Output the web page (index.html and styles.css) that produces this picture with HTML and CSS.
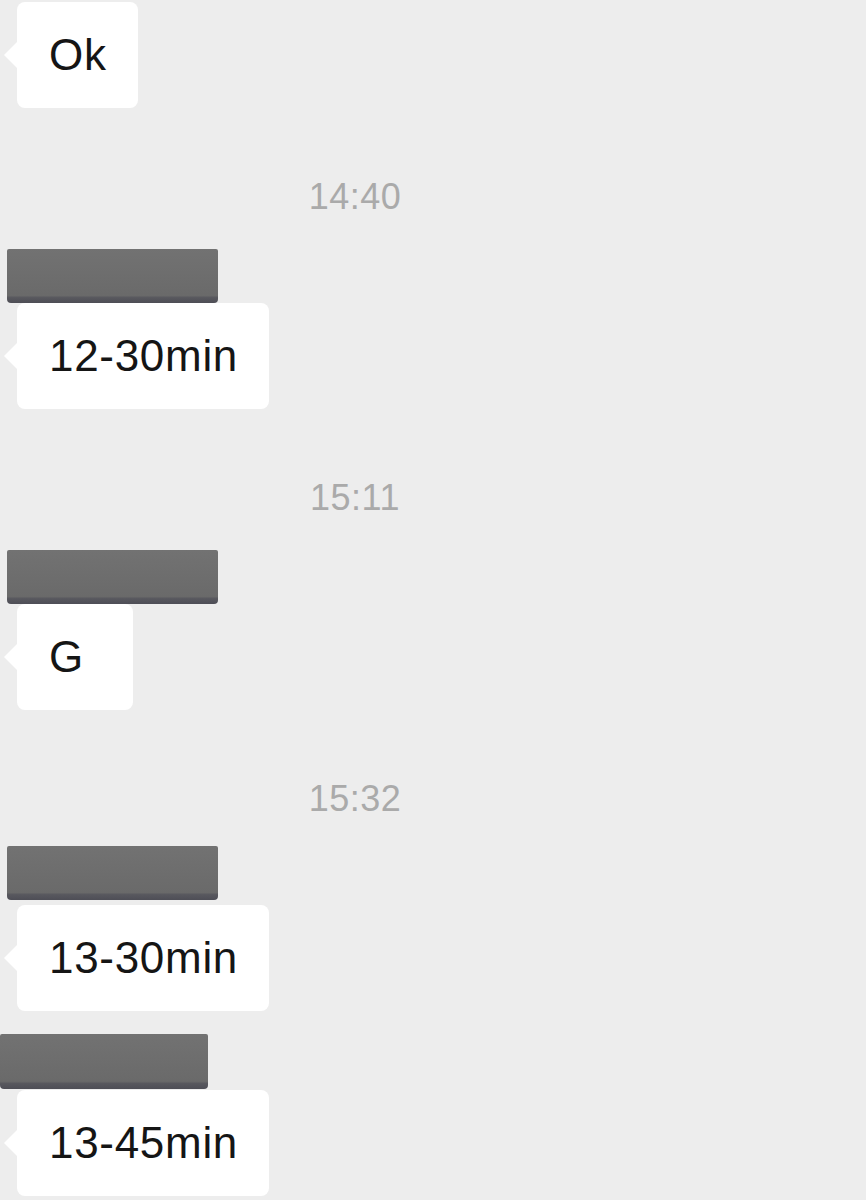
FILE: index.html
```html
<!DOCTYPE html>
<html>
<head>
<meta charset="utf-8">
<link rel="stylesheet" href="styles.css">
</head>
<body>
<div class="chat">
  <div class="msg msg-first">
    <div class="bubble">Ok</div>
  </div>

  <div class="time">14:40</div>
  <div class="msg">
    <div class="name-mask"></div>
    <div class="bubble">12-30min</div>
  </div>

  <div class="time">15:11</div>
  <div class="msg">
    <div class="name-mask"></div>
    <div class="bubble">G</div>
  </div>

  <div class="time time-close">15:32</div>
  <div class="msg">
    <div class="name-mask name-mask-gap"></div>
    <div class="bubble">13-30min</div>
  </div>

  <div class="msg msg-follow">
    <div class="name-mask name-mask-edge"></div>
    <div class="bubble">13-45min</div>
  </div>
</div>
</body>
</html>
```

FILE: styles.css
```css
html, body {
  margin: 0;
  padding: 0;
  background: #ededed;
}

body {
  width: 866px;
  height: 1200px;
  overflow: hidden;
  font-family: "Liberation Sans", Arial, sans-serif;
}

.chat {
  display: flex;
  flex-direction: column;
  padding-top: 2px;
}

.msg {
  display: flex;
  flex-direction: column;
  align-items: flex-start;
}

.msg-follow {
  margin-top: 23px;
}

.time {
  margin: 69px 0 32px 0;
  padding-right: 156px;
  height: 40px;
  line-height: 40px;
  text-align: center;
  font-size: 36px;
  color: #aaaaaa;
  letter-spacing: 0.5px;
}

.time-close {
  margin-bottom: 27px;
}

.name-mask {
  margin-left: 7px;
  width: 211px;
  height: 54px;
  border-radius: 2px 2px 4px 4px;
  background: linear-gradient(to bottom, #727272 0%, #6a6a6a 86%, #58585e 90%, #4e4e56 100%);
}

.name-mask-gap {
  margin-bottom: 5px;
}

.name-mask-edge {
  margin-left: 0;
  width: 208px;
  height: 55px;
  margin-bottom: 1px;
}

.bubble {
  position: relative;
  margin-left: 17px;
  min-width: 53px;
  padding: 28px 31px 28px 32px;
  height: 50px;
  line-height: 50px;
  background: #ffffff;
  border-radius: 8px;
  font-size: 44px;
  letter-spacing: 0.7px;
  color: #151515;
}

.bubble::before {
  content: "";
  position: absolute;
  left: -13px;
  top: 50%;
  margin-top: -13px;
  width: 0;
  height: 0;
  border-top: 13px solid transparent;
  border-bottom: 13px solid transparent;
  border-right: 13px solid #ffffff;
}
```
